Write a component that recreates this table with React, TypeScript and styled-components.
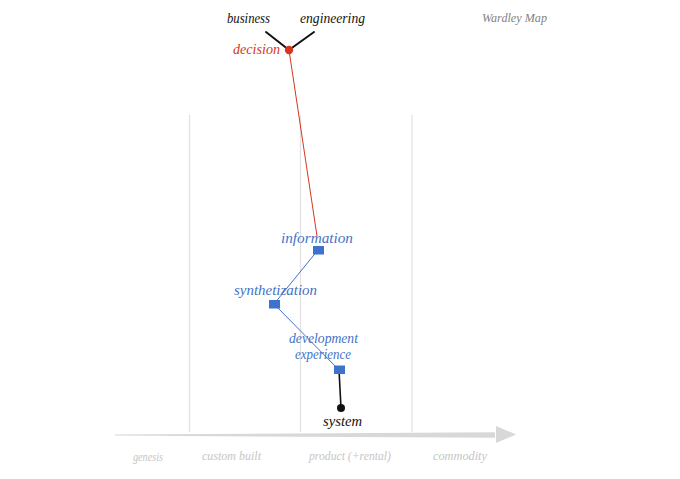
import styled, { createGlobalStyle } from "styled-components";

const GlobalStyle = createGlobalStyle`
  html, body {
    margin: 0;
    padding: 0;
    background: #fff;
  }
`;

const Page = styled.div`
  width: 680px;
  height: 479px;
  background: #fff;
  overflow: hidden;
`;

const Map = styled.svg`
  display: block;
  font-family: "Liberation Serif", "DejaVu Serif", serif;
  font-style: italic;
`;

const Label = styled.text<{ $tone: string; $size?: number }>`
  fill: ${(p) => p.$tone};
  font-size: ${(p) => p.$size ?? 14}px;
  text-anchor: middle;
`;

const GridLine = styled.line`
  stroke: #e2e2e2;
  stroke-width: 1.3;
`;

const Link = styled.line<{ $tone: string; $width?: number }>`
  stroke: ${(p) => p.$tone};
  stroke-width: ${(p) => p.$width ?? 1};
  stroke-linecap: round;
`;

const Dot = styled.circle<{ $tone: string }>`
  fill: ${(p) => p.$tone};
`;

const Box = styled.rect`
  fill: #3e72cc;
`;

const Axis = styled.polygon`
  fill: #d8d8d8;
`;

const RED = "#d6361c";
const BLUE = "#4472c4";
const INK = "#111";
const FAINT = "#c6c6c6";

type Text = { t: string; x: number; y: number; w: number; tone: string; size?: number };

const labels: Text[] = [
  { t: "business", x: 248.5, y: 23, w: 43, tone: INK },
  { t: "engineering", x: 332.5, y: 23, w: 65, tone: INK },
  { t: "decision", x: 256.5, y: 54, w: 47, tone: RED },
  { t: "information", x: 317, y: 243, w: 72, tone: BLUE },
  { t: "synthetization", x: 275.5, y: 295, w: 83, tone: BLUE },
  { t: "development", x: 323.5, y: 343, w: 69, tone: BLUE },
  { t: "experience", x: 323, y: 359, w: 56, tone: BLUE },
  { t: "system", x: 342.5, y: 426, w: 39, tone: INK },
  { t: "genesis", x: 148, y: 461, w: 30, tone: FAINT, size: 12 },
  { t: "custom built", x: 231.5, y: 460, w: 59, tone: FAINT, size: 12 },
  { t: "product (+rental)", x: 350, y: 460, w: 82, tone: FAINT, size: 12 },
  { t: "commodity", x: 460, y: 460, w: 54, tone: FAINT, size: 12 },
  { t: "Wardley Map", x: 514.5, y: 22, w: 65, tone: "#838383", size: 12 },
];

export default function App() {
  return (
    <Page>
      <GlobalStyle />
      <Map width={680} height={479} viewBox="0 0 680 479">
        {[189.5, 300.5, 412].map((x) => (
          <GridLine key={x} x1={x} y1={115} x2={x} y2={432} />
        ))}

        <Axis points="115,434.6 495,432.3 495,437.8 115,435.6" />
        <Axis points="496,426 516,434.5 496,443" />

        <Link $tone={INK} $width={2} x1={266} y1={32} x2={289} y2={50} />
        <Link $tone={INK} $width={2} x1={314} y1={32} x2={289} y2={50} />
        <Link $tone={RED} x1={289} y1={50} x2={317} y2={236} />
        <Link $tone={BLUE} x1={318} y1={250} x2={274} y2={304} />
        <Link $tone={BLUE} x1={274} y1={304} x2={339} y2={370} />
        <Link $tone={INK} $width={1.6} x1={339} y1={370} x2={341} y2={408} />

        <Dot $tone={RED} cx={289} cy={50} r={4.2} />
        <Dot $tone={INK} cx={341} cy={408} r={4} />

        <Box x={313} y={246} width={11} height={8.5} />
        <Box x={269} y={300} width={11} height={8.5} />
        <Box x={334} y={365.5} width={11} height={8.5} />

        {labels.map((l) => (
          <Label
            key={l.t}
            x={l.x}
            y={l.y}
            $tone={l.tone}
            $size={l.size}
            textLength={l.w}
            lengthAdjust="spacingAndGlyphs"
          >
            {l.t}
          </Label>
        ))}
      </Map>
    </Page>
  );
}
